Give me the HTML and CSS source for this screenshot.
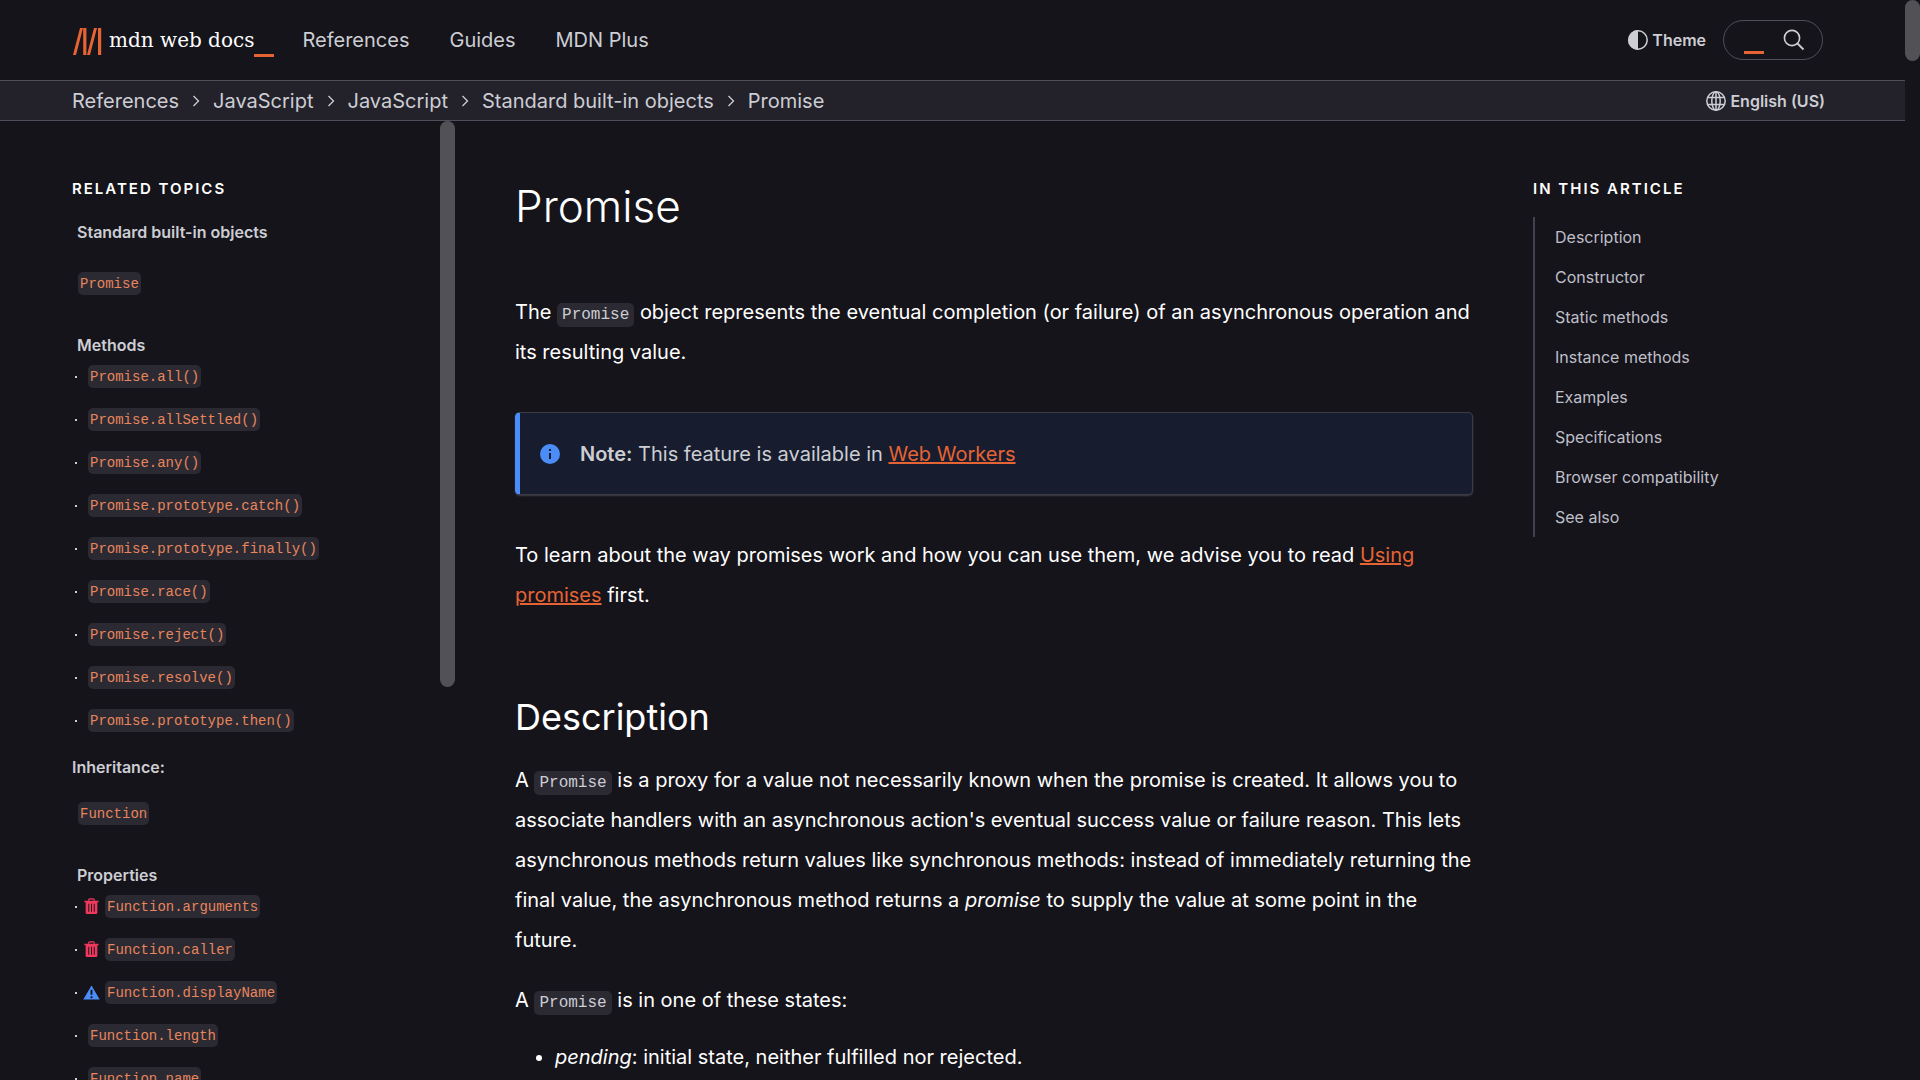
FILE: index.html
```html
<!DOCTYPE html>
<html lang="en-US">
<head>
<meta charset="utf-8">
<meta name="viewport" content="width=device-width, initial-scale=1">
<title>Promise - JavaScript | MDN</title>
<link rel="stylesheet" href="styles.css">
</head>
<body>
<svg class="sprite" aria-hidden="true">
  <symbol id="chevron" viewBox="0 0 8 14"><path d="M1.5 2l5 5-5 5" fill="none" stroke="currentColor" stroke-width="1.3"/></symbol>
  <symbol id="trash" viewBox="0 0 16 18"><path d="M5 3V2.200Q5 1 6.200 1h3.600Q11 1 11 2.200V3" fill="none" stroke="currentColor" stroke-width="1.300"/><path fill="currentColor" fill-rule="evenodd" d="M.5 3h15v1.500h-1.300V15.500q0 1.500-1.500 1.500H3.300q-1.500 0-1.500-1.500V4.500H.5zM4.600 6v8.500h1V6zm2.900 0v8.500h1V6zm2.900 0v8.500h1V6z"/></symbol>
  <symbol id="warning" viewBox="0 0 18 16"><path fill="currentColor" fill-rule="evenodd" d="M9 .5 17.700 15.500H.3zM8 5v5.500h2V5zm0 7v2h2v-2z"/></symbol>
</svg>
<div class="window">
  <div class="page">
    <header class="top">
      <a class="logo" href="#" aria-label="MDN home">
        <svg class="logo-mark" viewBox="0 0 30 30" aria-hidden="true"><path d="M8 3h3L4 30H1zM11.200 3h3.200v27h-3.200zM22 3h3l-7 27h-3zM26 3h3.200v27H26z" fill="#e66434"/></svg>
        <span class="logo-text">mdn web docs</span>
        <span class="logo-cursor"></span>
      </a>
      <nav class="menu" aria-label="Main">
        <a href="#">References</a>
        <a href="#">Guides</a>
        <a href="#">MDN Plus</a>
      </nav>
      <div class="tools">
        <button class="tool" type="button">
          <svg width="20" height="20" viewBox="0 0 20 20" aria-hidden="true"><circle cx="10" cy="10" r="9.200" fill="none" stroke="currentColor" stroke-width="1.500"/><path d="M10 0a10 10 0 0 0 0 20z" fill="currentColor"/></svg>
          Theme
        </button>
        <button class="search" type="button" aria-label="Search">
          <span class="search-cursor"></span>
          <svg width="22" height="22" viewBox="0 0 22 22" aria-hidden="true"><circle cx="9" cy="9" r="7.600" fill="none" stroke="currentColor" stroke-width="1.600"/><path d="M14.500 14.500l6 6" stroke="currentColor" stroke-width="1.800"/></svg>
        </button>
      </div>
    </header>
    <div class="crumb-bar">
      <nav class="crumbs" aria-label="Breadcrumb">
        <a href="#">References</a>
        <svg class="sep"><use href="#chevron"/></svg>
        <a href="#">JavaScript</a>
        <svg class="sep"><use href="#chevron"/></svg>
        <a href="#">JavaScript</a>
        <svg class="sep"><use href="#chevron"/></svg>
        <a href="#">Standard built-in objects</a>
        <svg class="sep"><use href="#chevron"/></svg>
        <a href="#">Promise</a>
      </nav>
      <button class="tool" type="button">
        <svg width="20" height="20" viewBox="0 0 20 20" fill="none" stroke="currentColor" stroke-width="1.500" aria-hidden="true"><circle cx="10" cy="10" r="9.200"/><ellipse cx="10" cy="10" rx="4.200" ry="9.200"/><path d="M10 1v18M1.500 6.500h17M1.500 13.500h17"/></svg>
        English (US)
      </button>
    </div>
    <div class="columns">
      <aside class="sidebar">
        <div class="related">
          <h2 class="eyebrow">Related Topics</h2>
          <p class="group first"><a href="#">Standard built-in objects</a></p>
          <p class="entry"><a href="#"><code>Promise</code></a></p>
          <p class="group">Methods</p>
          <ul class="refs">
            <li><a href="#"><code>Promise.all()</code></a></li>
            <li><a href="#"><code>Promise.allSettled()</code></a></li>
            <li><a href="#"><code>Promise.any()</code></a></li>
            <li><a href="#"><code>Promise.prototype.catch()</code></a></li>
            <li><a href="#"><code>Promise.prototype.finally()</code></a></li>
            <li><a href="#"><code>Promise.race()</code></a></li>
            <li><a href="#"><code>Promise.reject()</code></a></li>
            <li><a href="#"><code>Promise.resolve()</code></a></li>
            <li><a href="#"><code>Promise.prototype.then()</code></a></li>
          </ul>
          <p class="inherit">Inheritance:</p>
          <p class="entry"><a href="#"><code>Function</code></a></p>
          <p class="group">Properties</p>
          <ul class="refs">
            <li class="flagged"><svg class="flag deprecated" role="img" aria-label="Deprecated"><use href="#trash"/></svg><a href="#"><code>Function.arguments</code></a></li>
            <li class="flagged"><svg class="flag deprecated" role="img" aria-label="Deprecated"><use href="#trash"/></svg><a href="#"><code>Function.caller</code></a></li>
            <li class="flagged"><svg class="flag nonstandard" role="img" aria-label="Non-standard"><use href="#warning"/></svg><a href="#"><code>Function.displayName</code></a></li>
            <li><a href="#"><code>Function.length</code></a></li>
            <li><a href="#"><code>Function.name</code></a></li>
          </ul>
        </div>
        <div class="track"><div class="thumb"></div></div>
      </aside>
      <main class="article">
        <h1>Promise</h1>
        <p>The <code>Promise</code> object represents the eventual completion (or failure) of an asynchronous operation and its resulting value.</p>
        <div class="note">
          <svg width="20" height="20" viewBox="0 0 20 20" aria-hidden="true"><circle cx="10" cy="10" r="10" fill="#4a8df8"/><path d="M9 5h2v2H9zM9 9h2v6H9z" fill="#171d2e"/></svg>
          <p><strong>Note:</strong> This feature is available in <a href="#">Web Workers</a></p>
        </div>
        <p>To learn about the way promises work and how you can use them, we advise you to read <a href="#">Using promises</a> first.</p>
        <h2>Description</h2>
        <p>A <code>Promise</code> is a proxy for a value not necessarily known when the promise is created. It allows you to associate handlers with an asynchronous action's eventual success value or failure reason. This lets asynchronous methods return values like synchronous methods: instead of immediately returning the final value, the asynchronous method returns a <em>promise</em> to supply the value at some point in the future.</p>
        <p>A <code>Promise</code> is in one of these states:</p>
        <ul>
          <li><em>pending</em>: initial state, neither fulfilled nor rejected.</li>
        </ul>
      </main>
      <aside class="toc">
        <h2 class="eyebrow">In this article</h2>
        <ul>
          <li><a href="#">Description</a></li>
          <li><a href="#">Constructor</a></li>
          <li><a href="#">Static methods</a></li>
          <li><a href="#">Instance methods</a></li>
          <li><a href="#">Examples</a></li>
          <li><a href="#">Specifications</a></li>
          <li><a href="#">Browser compatibility</a></li>
          <li><a href="#">See also</a></li>
        </ul>
      </aside>
    </div>
  </div>
  <div class="track"><div class="thumb page-thumb"></div></div>
</div>
</body>
</html>
```

FILE: styles.css
```css
* {
  box-sizing: border-box;
}

body,
h1,
h2,
p,
ul {
  margin: 0;
  padding: 0;
}

body {
  background: #15141a;
  color: #fff;
  font-family: Inter, sans-serif;
  font-size: 20px;
  line-height: 40px;
}

a {
  color: inherit;
  text-decoration: none;
}

button {
  padding: 0;
  border: 0;
  background: none;
  color: inherit;
  font: inherit;
}

ul {
  list-style: none;
}

code {
  border-radius: 5px;
  background: #2b2a33;
  font-family: "Liberation Mono", monospace;
}

.sprite {
  display: none;
}

.window {
  display: flex;
  height: 100vh;
  overflow: hidden;
}

.page {
  display: flex;
  flex: 1;
  flex-direction: column;
  min-width: 0;
}

/* Scrollbars */
.track {
  flex: none;
  width: 15px;
}

.thumb {
  height: 59%;
  border-radius: 8px;
  background: #525156;
}

.page-thumb {
  height: 61px;
}

/* Header */
.top {
  display: flex;
  flex: none;
  align-items: center;
  height: 80px;
  padding: 0 82px 0 72px;
  color: #cdcdd4;
}

.logo {
  display: flex;
  align-items: center;
  margin-right: 28px;
}

.logo-mark {
  width: 30px;
  height: 30px;
  margin-right: 7px;
}

.logo-text {
  color: #fff;
  font-family: "DejaVu Serif", serif;
  font-size: 20px;
}

.logo-cursor {
  align-self: flex-end;
  width: 20px;
  height: 3px;
  margin-bottom: 3px;
  background: #e66434;
}

.menu {
  display: flex;
  gap: 40px;
}

.tools {
  display: flex;
  align-items: center;
  gap: 17px;
  margin-left: auto;
}

.tool {
  display: flex;
  align-items: center;
  gap: 4px;
  font-size: 16px;
  font-weight: 600;
}

.search {
  display: flex;
  align-items: center;
  justify-content: space-between;
  width: 100px;
  height: 40px;
  padding: 0 17px 0 20px;
  border: 1px solid #4f4e5a;
  border-radius: 20px;
}

.search-cursor {
  align-self: flex-end;
  width: 20px;
  height: 3px;
  margin-bottom: 5px;
  background: #e66434;
}

/* Breadcrumbs */
.crumb-bar {
  display: flex;
  flex: none;
  align-items: center;
  justify-content: space-between;
  height: 41px;
  padding: 0 80px 0 72px;
  border: solid #4f4e5a;
  border-width: 1px 0;
  background: #23222b;
  color: #cdcdd4;
}

.crumbs {
  display: flex;
  align-items: center;
  gap: 13px;
}

.sep {
  width: 8px;
  height: 14px;
}

/* Columns */
.columns {
  display: grid;
  flex: 1;
  grid-template-columns: 383px minmax(0, 1fr) 292px;
  grid-template-rows: minmax(0, 1fr);
  column-gap: 60px;
  min-height: 0;
  padding: 0 80px 0 72px;
}

.eyebrow {
  font-size: 15px;
  font-weight: 600;
  letter-spacing: 2px;
  line-height: 20px;
  text-transform: uppercase;
}

.sidebar {
  display: flex;
  min-height: 0;
}

.related {
  flex: 1;
  padding-top: 58px;
  overflow: hidden;
  color: #cdcdd4;
  font-size: 16px;
}

.related .eyebrow {
  color: #fff;
}

.group,
.inherit {
  font-weight: 600;
  line-height: 20px;
}

.group {
  margin-top: 30px;
  padding-left: 5px;
}

.first {
  margin: 23px 0 20px;
}

.inherit {
  margin: 15px 0;
}

.entry {
  padding-left: 6px;
}

.entry,
.refs li {
  display: flex;
  align-items: center;
  height: 43px;
}

.refs li::before {
  flex: none;
  width: 2px;
  height: 2px;
  margin: 0 11px 0 3px;
  background: #cdcdd4;
  content: "";
}

.refs .flagged::before {
  margin-right: 6px;
}

.related a code {
  display: block;
  padding: 2px 2px 0;
  color: #e8855c;
  font-size: 14px;
  line-height: 21px;
}

.flag {
  width: 17px;
  height: 17px;
  margin-right: 5px;
}

.deprecated {
  color: #f0385f;
}

.nonstandard {
  color: #4a8df8;
}

/* Article */
.article {
  padding-top: 55px;
}

.article h1 {
  margin-bottom: 56px;
  font-size: 44px;
  font-weight: 300;
  line-height: 60px;
}

.article h2 {
  margin: 77px 0 18px;
  font-size: 36px;
  font-weight: 400;
  line-height: 50px;
}

.article code {
  padding: 3px 5px;
  color: #cdcdd4;
  font-size: 16px;
  line-height: 20px;
}

.article p + p {
  margin-top: 20px;
}

.article ul {
  margin-top: 17px;
  padding-left: 40px;
  list-style: disc;
}

.article p a {
  color: #e66434;
  text-decoration: underline;
}

.note {
  display: flex;
  align-items: center;
  gap: 20px;
  margin: 40px 0;
  padding: 21px 20px 20px;
  border: 1px solid #3b3a45;
  border-left: 5px solid #4a8df8;
  border-radius: 5px;
  background: #171d2e;
  box-shadow: 0 1px 2px #42414d;
  color: #cdcdd4;
}

.note strong {
  font-weight: 600;
}

/* Table of contents */
.toc {
  padding-top: 58px;
}

.toc ul {
  margin-top: 18px;
  padding-left: 20px;
  border-left: 2px solid #42414d;
  color: #bfbfc9;
  font-size: 16px;
}
```
